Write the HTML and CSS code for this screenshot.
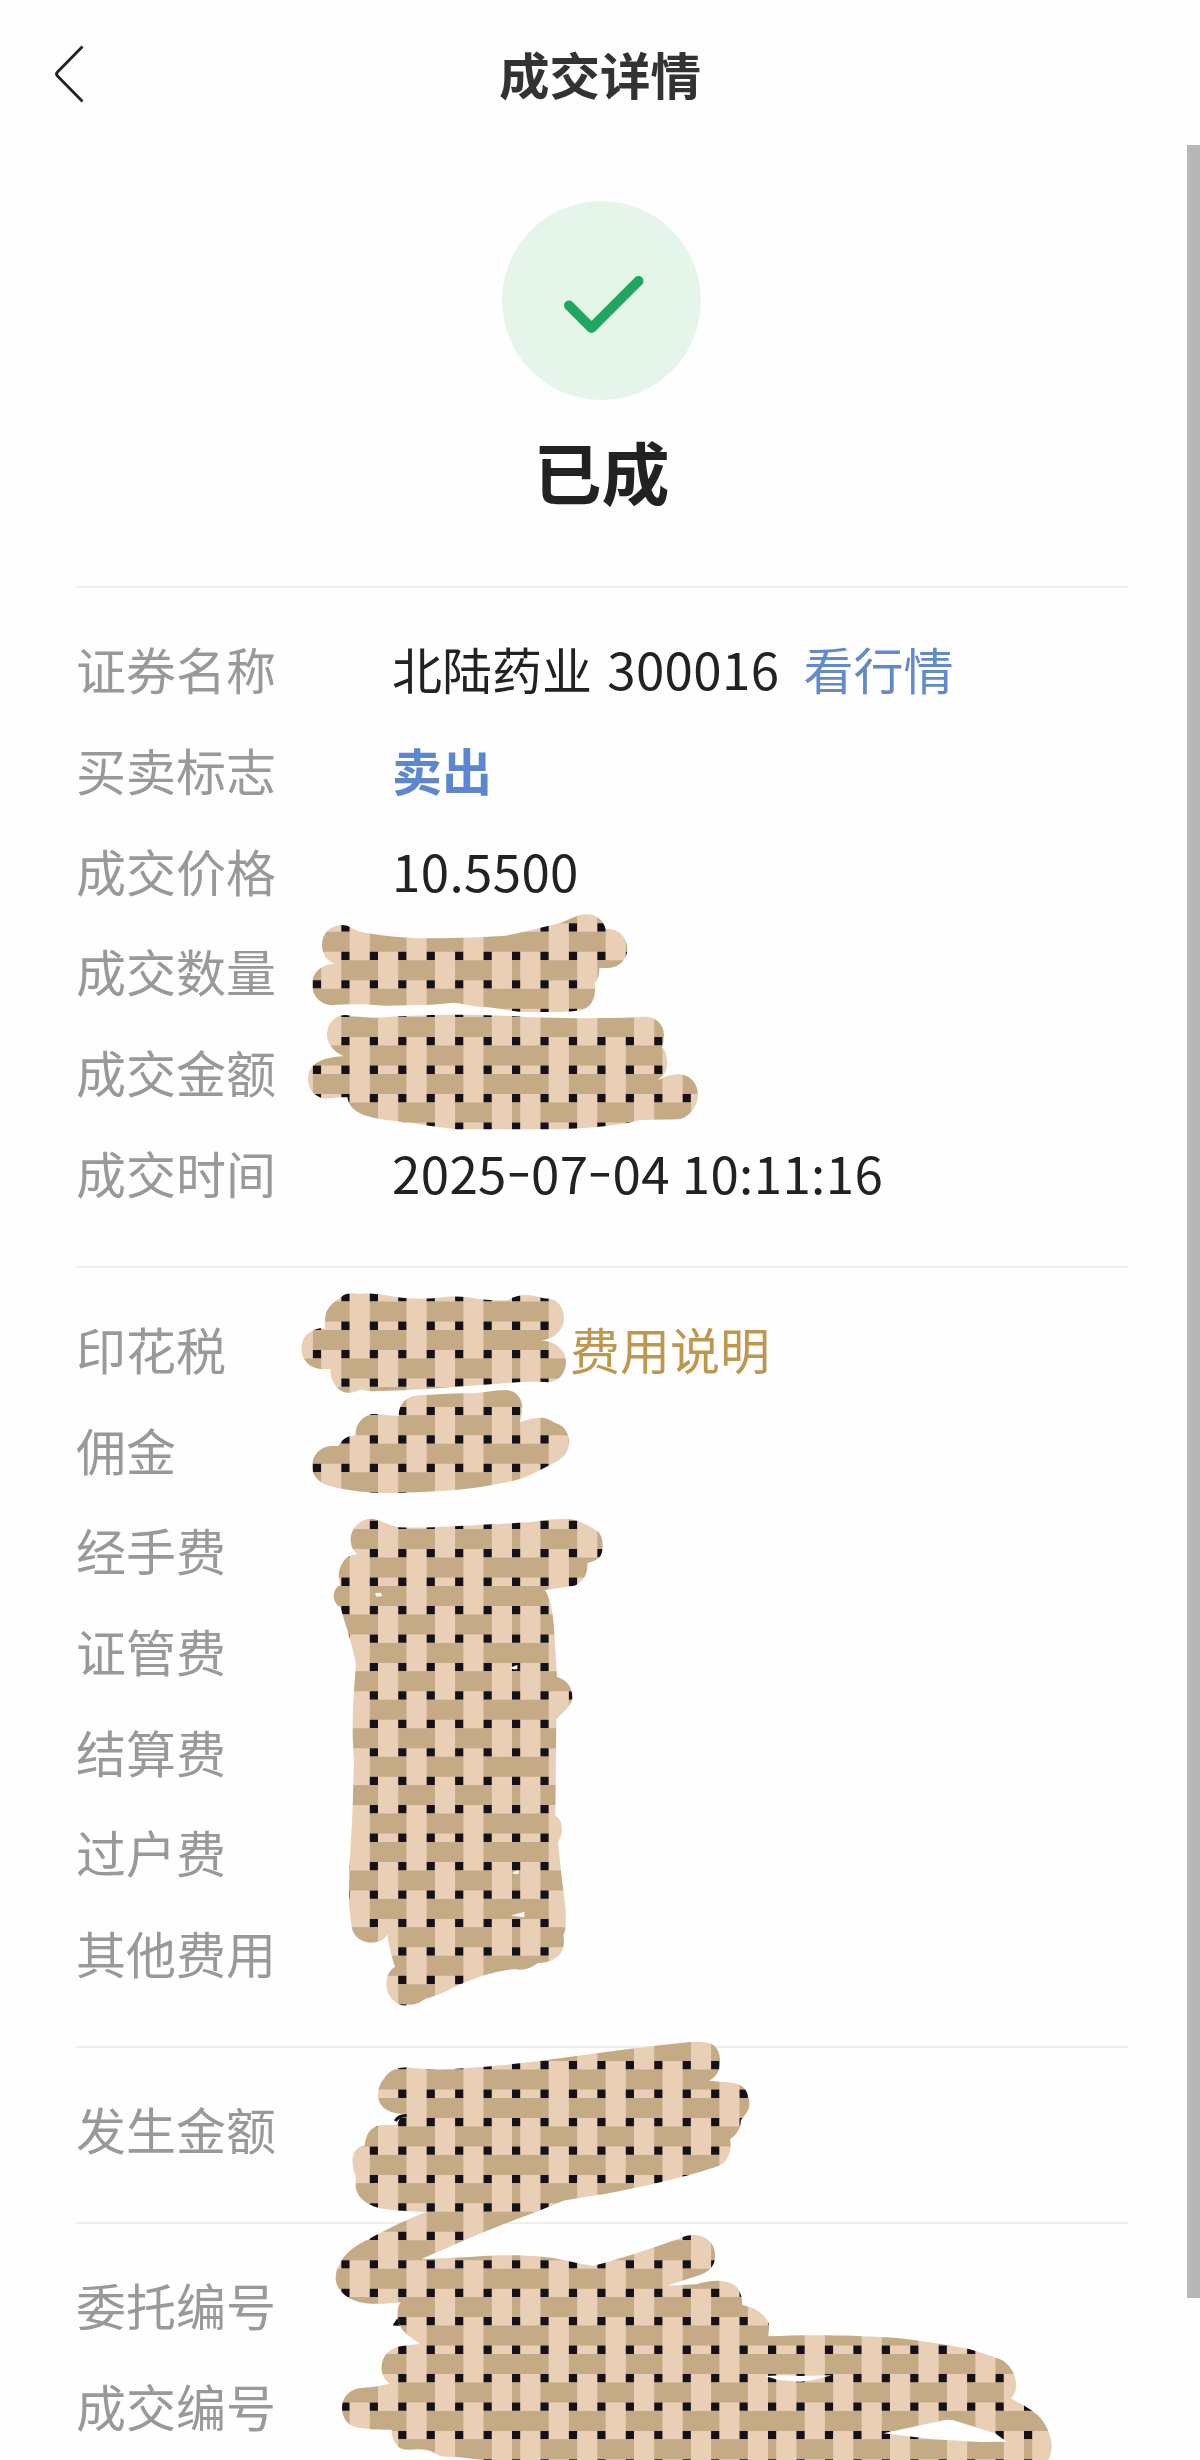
FILE: index.html
```html
<!DOCTYPE html>
<html lang="zh-CN">
<head>
    <meta charset="UTF-8">
    <meta name="viewport" content="width=device-width, initial-scale=1.0">
    <title>成交详情</title>
    <link rel="stylesheet" href="styles.css">
</head>
<body>

    <div class="page">
        <!-- Top bar -->
        <header class="header">
            <svg class="back" viewBox="0 0 36 64" width="36" height="64">
                <path d="M31.500 4.500L6.500 30Q4.500 32 6.500 34L31.500 59.500" fill="none" stroke="#222" stroke-width="2.800"/>
            </svg>
            <h1 class="title">成交详情</h1>
        </header>

        <!-- Deal status -->
        <div class="status">
            <div class="status-icon">
                <svg viewBox="0 0 199 199" width="199" height="199">
                    <path d="M67 104.500L89.500 127L136.500 80" fill="none" stroke="#1ea75e" stroke-width="10" stroke-linecap="round" stroke-linejoin="round"/>
                </svg>
            </div>
            <h2 class="status-text">已成</h2>
        </div>

        <section class="section">
            <div class="row"><span class="label">证券名称</span><span class="value name">北陆药业 <span class="digits">300016</span></span><a class="link">看行情</a></div>
            <div class="row"><span class="label">买卖标志</span><span class="value sell">卖出</span></div>
            <div class="row"><span class="label">成交价格</span><span class="value digits">10.5500</span></div>
            <div class="row"><span class="label">成交数量</span></div>
            <div class="row"><span class="label">成交金额</span></div>
            <div class="row"><span class="label">成交时间</span><span class="value digits">2025<span class="dash">-</span>07<span class="dash">-</span>04 10:11:16</span></div>
        </section>

        <section class="section">
            <div class="row"><span class="label">印花税</span><a class="fee-link">费用说明</a></div>
            <div class="row"><span class="label">佣金</span></div>
            <div class="row"><span class="label">经手费</span></div>
            <div class="row"><span class="label">证管费</span></div>
            <div class="row"><span class="label">结算费</span></div>
            <div class="row"><span class="label">过户费</span></div>
            <div class="row"><span class="label">其他费用</span></div>
        </section>

        <section class="section">
            <div class="row"><span class="label">发生金额</span></div>
        </section>

        <section class="section">
            <div class="row"><span class="label">委托编号</span></div>
            <div class="row"><span class="label">成交编号</span></div>
        </section>

        <div class="scrollbar"></div>

        <!-- Woven brush strokes covering the private values -->
        <svg class="brush" viewBox="0 0 1200 2460" width="1200" height="2460">
            <defs>
                <g id="row-even">
                    <path d="M0 10H256" stroke="#c4aa85" stroke-width="20" stroke-dasharray="36.700 20.189"/>
                    <path d="M0 24.200H256" stroke="#15111b" stroke-width="8.400" stroke-dasharray="8.200 20.244"/>
                </g>
                <g id="row-odd">
                    <path d="M0 10H8.200" stroke="#c4aa85" stroke-width="20"/>
                    <path d="M28.444 10H256" stroke="#c4aa85" stroke-width="20" stroke-dasharray="36.700 20.189"/>
                    <path d="M0 24.200H256" stroke="#15111b" stroke-width="8.400" stroke-dasharray="8.200 20.244"/>
                </g>
                <pattern id="weave" x="0" y="50" width="256" height="256" patternUnits="userSpaceOnUse">
                    <rect width="256" height="256" fill="#e9cfb5"/>
                    <use href="#row-even"/>
                    <use href="#row-odd" y="28.444"/>
                    <use href="#row-even" y="56.889"/>
                    <use href="#row-odd" y="85.333"/>
                    <use href="#row-even" y="113.778"/>
                    <use href="#row-odd" y="142.222"/>
                    <use href="#row-even" y="170.667"/>
                    <use href="#row-odd" y="199.111"/>
                    <use href="#row-even" y="227.556"/>
                </pattern>
                <clipPath id="strokes">
                    <path transform="translate(290 900) scale(.33333)" d="M96 135C96 100 120 76 155 75C175 75 188 86 205 94C270 108 340 115 420 115C500 114 580 112 648 107C700 97 750 83 800 72C840 62 855 43 890 43C920 43 940 62 947 86C985 84 1012 112 1012 146C1012 180 985 204 950 204L928 204C928 225 924 240 914 250C920 290 905 325 870 331C850 335 830 336 810 336L700 336C650 334 620 321 570 320C530 317 510 308 490 308C450 312 420 315 380 315L290 317C240 313 180 310 125 316C90 314 66 285 66 253C66 220 90 194 135 191C110 185 96 160 96 135Z"/>
                    <path transform="translate(290 900) scale(.33333)" d="M111 405C111 370 135 345 165 345C200 348 230 355 262 353C330 348 400 345 480 344C560 344 640 346 720 352C800 355 900 355 1000 353L1065 350C1100 350 1122 375 1122 405C1124 420 1118 432 1116 442C1130 455 1133 480 1131 500C1128 520 1115 530 1103 540C1120 537 1130 523 1165 523C1200 523 1224 550 1224 585C1224 620 1195 655 1165 658L1050 660C1000 675 900 685 800 688L500 688C420 678 340 665 280 659C230 650 180 640 172 592C140 590 120 597 100 595C75 590 54 570 54 538C54 500 80 472 162 469C130 455 111 430 111 405Z"/>
                    <path transform="translate(290 1280) scale(.33333)" d="M106 110C108 85 130 64 155 50C165 40 190 38 210 42C240 38 270 43 300 48C340 56 390 58 430 55C480 48 520 48 560 56C600 60 630 62 655 60C670 50 690 45 710 45C740 46 750 56 780 56C805 60 822 85 822 115C822 150 790 180 752 181C795 183 828 210 828 245C828 280 805 305 775 307C740 305 700 305 660 308C560 315 440 325 340 331L250 334C230 333 220 329 210 329C195 337 185 338 170 338C145 335 120 305 121 267L90 267C60 265 34 240 34 205C34 175 55 150 90 145L106 147C104 135 104 120 106 110Z"/>
                    <path transform="translate(290 1280) scale(.33333)" d="M66 560C66 525 90 500 125 498L145 498C155 480 170 468 197 466C195 435 215 410 245 402C275 403 300 406 326 408C326 370 350 347 390 346C440 343 490 338 550 340C580 338 610 331 650 330C680 332 697 355 697 385C697 400 693 415 689 427C710 420 725 413 755 413C775 413 785 425 805 432C825 440 838 465 837 485C837 520 815 540 780 555C745 572 710 595 670 602C610 615 550 625 500 629C430 635 350 640 270 639C210 637 150 628 110 615C85 605 66 585 66 560Z"/>
                    <path transform="translate(320 1500) scale(.33333)" d="M92 118C92 85 120 56 155 56C185 60 205 75 235 82C290 84 340 82 400 79C480 75 560 70 630 67C670 60 700 56 740 57C780 58 810 80 835 95C850 112 850 140 845 160C840 178 820 185 802 190C805 225 785 250 760 258L675 270C695 300 700 350 703 400L711 531C740 540 758 560 757 595C750 625 725 640 709 658L706 948C722 955 728 975 725 1000C722 1015 715 1022 714 1030L724 1120C728 1170 740 1220 737 1270C738 1290 732 1300 730 1305C735 1330 730 1360 710 1372C690 1388 670 1388 652 1390C635 1405 610 1412 585 1408C560 1408 500 1422 480 1430C440 1445 410 1455 385 1470C360 1485 330 1490 310 1500C290 1515 270 1517 245 1516C220 1508 200 1485 199 1455C199 1425 210 1410 225 1400C215 1370 205 1330 202 1302C195 1320 175 1328 150 1328C120 1325 98 1305 95 1280C87 1230 86 1180 88 1130C90 1050 95 1000 98 920L102 780C95 700 97 620 108 495C103 460 90 420 82 390C75 370 70 350 62 325C48 315 40 300 41 285C43 270 50 260 60 255C53 230 55 205 70 185C80 170 95 165 112 163C97 150 92 135 92 118Z"/>
                    <path transform="translate(320 2020) scale(.33333)" d="M174 225C174 200 185 185 195 172C210 150 235 142 262 142C320 150 380 150 440 144C540 138 640 126 720 115C850 95 980 80 1110 66C1140 64 1165 66 1180 75C1200 90 1203 120 1198 145C1192 165 1182 175 1167 182C1200 185 1225 186 1245 190C1275 195 1290 225 1288 255C1287 275 1270 290 1263 300C1262 325 1250 345 1230 358C1235 380 1230 400 1222 415C1210 435 1195 440 1165 448C1100 470 950 505 850 523C800 530 760 537 730 542C640 580 500 630 430 662C380 685 340 700 303 718L450 711C520 705 600 703 680 712C740 720 790 735 820 738C870 725 970 695 1080 655C1100 645 1120 643 1140 647C1170 655 1187 680 1185 710C1185 740 1165 755 1140 765L1040 797L1130 793C1160 783 1190 780 1220 785C1250 792 1267 815 1267 855C1310 864 1350 890 1347 925L1345 949C1450 943 1600 945 1700 952C1780 957 1850 970 1950 988C1990 1000 2020 1010 2050 1022C2080 1045 2090 1075 2088 1100C2088 1115 2080 1125 2073 1136C2110 1155 2150 1175 2170 1205C2190 1235 2197 1265 2195 1285C2193 1305 2187 1315 2182 1325L500 1322C450 1315 420 1310 375 1310C350 1308 345 1295 320 1290C295 1285 270 1292 250 1288C225 1280 215 1255 215 1229C180 1230 150 1227 120 1224C85 1220 66 1195 66 1163C66 1130 90 1105 130 1103C160 1102 185 1095 210 1091C185 1075 182 1050 186 1030C192 1000 215 980 250 977L300 972C270 950 245 935 240 915C228 895 228 865 242 847C200 852 150 855 115 845C75 835 45 805 47 770C50 730 80 695 110 677C150 655 260 595 320 577C280 572 240 575 200 568C140 560 105 530 107 490L107 465C98 450 95 420 100 405C107 385 120 378 134 378C135 350 150 320 180 316L230 314L245 285L260 281C225 285 174 270 174 225Z"/>
                </clipPath>
            </defs>
            <rect width="1200" height="2460" fill="url(#weave)" clip-path="url(#strokes)"/>
            <!-- gaps the brush missed -->
            <g fill="#fefefe">
                <path transform="translate(320 1500) scale(.33333)" d="M165 280L182 278L187 288L170 290ZM570 503L592 495V508L580 508ZM578 1117L596 1110V1121L582 1122ZM572 1247L613 1235V1252Z"/>
                <path transform="translate(700 2240) scale(.33333)" d="M195 408L250 406L300 408L395 406L340 420L300 425L235 420ZM550 580L735 540Q750 538 765 542L885 580L920 605L840 606L700 598Z"/>
            </g>
            <!-- ends of the digits still showing -->
            <g transform="translate(320 2020) scale(.33333)">
                <path d="M226 303C234 290 244 286 260 287" fill="none" stroke="#151515" stroke-width="10"/>
                <path d="M220 917V912L232 895L240 917Z" fill="#151515"/>
            </g>
        </svg>
    </div>

</body>
</html>
```
FILE: styles.css
```css
* {
    box-sizing: border-box;
}

body {
    margin: 0;
    background-color: #fefefe;
    font-family: "Noto Sans CJK SC", sans-serif;
    font-size: 50px;
    color: #222;
}

.page {
    position: relative;
    height: 2460px;
    overflow: hidden;
}

/* Top bar */
.header {
    display: grid;
    grid-template-columns: 51px 36px 1fr 87px;
    align-items: center;
    height: 148px;
}

.back {
    grid-column: 2;
}

.title {
    margin: 0;
    padding-bottom: 3px;
    text-align: center;
    font-size: 50.5px;
    line-height: 74px;
    font-weight: 700;
    color: #333;
}

/* Deal status */
.status {
    display: flex;
    flex-direction: column;
    align-items: center;
    height: 438px;
    padding: 53px 0 0 3px;
}

.status-icon {
    width: 199px;
    height: 199px;
    border-radius: 50%;
    background-color: #e6f5e9;
}

.status-text {
    margin: 22px 0 0;
    font-size: 68px;
    line-height: 98px;
    font-weight: 700;
}

/* Groups of rows */
.section {
    margin: 0 72px 0 76px;
    padding: 30px 0 43.5px;
    border-top: 2px solid #eee;
}

.row {
    display: flex;
    align-items: center;
    height: 100.7px;
    line-height: 74px;
    white-space: pre;
}

.label {
    width: 316px;
    color: #999;
}

.name {
    word-spacing: 4px;
}

.digits {
    font-size: 51px;
    letter-spacing: 0.4px;
}

.dash {
    display: inline-block;
    margin: 0 3px;
    line-height: 1;
    transform: translateY(-5px) scaleX(1.4);
}

.sell {
    font-weight: 700;
    color: #5c86d0;
}

.link {
    margin-left: 24px;
    color: #6389cb;
}

.fee-link {
    margin-left: 178px;
    color: #bf974c;
}

/* Scrollbar */
.scrollbar {
    position: absolute;
    top: 145px;
    right: 0;
    width: 13px;
    height: 2153px;
    background-color: #b7b7b7;
}

/* Brush layer over the rows */
.brush {
    position: absolute;
    top: 0;
    left: 0;
}
```
